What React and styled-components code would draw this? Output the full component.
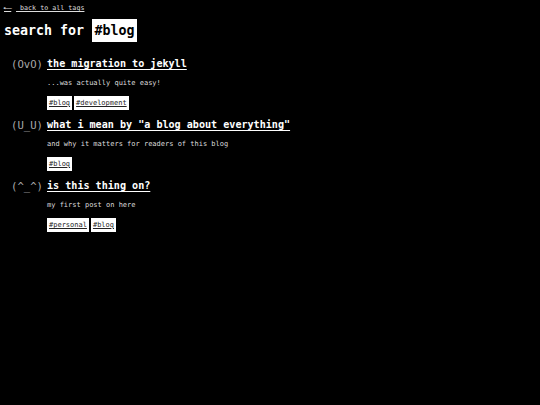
import React from 'react';
import styled, {createGlobalStyle} from 'styled-components';

const Global = createGlobalStyle`
  html, body {
    margin: 0;
    padding: 0;
    background: #000;
  }
  body {
    font-family: "DejaVu Sans Mono", "Liberation Mono", monospace;
    color: #fff;
  }
`

const Page = styled.div`
  min-height: 405px;
  padding: 3px 4px 0;
  box-sizing: border-box;
  background: #000;
`

const BackLink = styled.a`
  display: block;
  font-size: 6.7px;
  line-height: 10px;
  color: #ddd;
  text-decoration: underline;
  cursor: pointer;
  white-space: pre;
`

const Arrow = styled.span`
  display: inline-block;
  width: 12px;
  text-decoration: underline;
  transform: scaleX(1.8);
  transform-origin: left center;
`

const Heading = styled.h1`
  margin: 6px 0 0;
  font-size: 13.3px;
  line-height: 23px;
  font-weight: bold;
  color: #fff;
  white-space: pre;
`

const HeadTag = styled.span`
  display: inline-block;
  background: #fff;
  color: #000;
  padding: 0 2.5px;
  height: 23px;
`

const PostList = styled.div`
  margin-top: 14px;
`

const Post = styled.div`
  display: grid;
  grid-template-columns: 39px 1fr;
  column-gap: 4px;
  margin-bottom: 7px;
`

const Face = styled.div`
  font-size: 10.6px;
  line-height: 16px;
  color: #aaa;
  text-align: right;
  white-space: pre;
`

const Body = styled.div`
  display: flex;
  flex-direction: column;
  align-items: flex-start;
`

const Title = styled.a`
  font-size: 10.1px;
  line-height: 16px;
  font-weight: bold;
  color: #fff;
  text-decoration: underline;
  text-underline-offset: 2px;
  cursor: pointer;
`

const Desc = styled.p`
  margin: 6px 0 0;
  font-size: 7px;
  line-height: 10px;
  color: #ddd;
`

const Tags = styled.div`
  display: flex;
  gap: 2px;
  margin-top: 8px;
`

const Tag = styled.a`
  display: inline-block;
  background: #fff;
  color: #222;
  font-size: 7px;
  line-height: 14px;
  padding: 0 2px;
  text-decoration: underline;
  cursor: pointer;
`

const posts = [
  {face: '(OvO)', title: 'the migration to jekyll', desc: '...was actually quite easy!', tags: ['#blog', '#development']},
  {face: '(U_U)', title: 'what i mean by "a blog about everything"', desc: 'and why it matters for readers of this blog', tags: ['#blog']},
  {face: '(^_^)', title: 'is this thing on?', desc: 'my first post on here', tags: ['#personal', '#blog']},
]

export default function App() {
  return (
    <>
      <Global />
      <Page>
        <BackLink><Arrow>⟵</Arrow> back to all tags</BackLink>
        <Heading>search for <HeadTag>#blog</HeadTag></Heading>
        <PostList>
          {posts.map((p) => (
            <Post key={p.title}>
              <Face>{p.face}</Face>
              <Body>
                <Title>{p.title}</Title>
                <Desc>{p.desc}</Desc>
                <Tags>
                  {p.tags.map((t) => <Tag key={t}>{t}</Tag>)}
                </Tags>
              </Body>
            </Post>
          ))}
        </PostList>
      </Page>
    </>
  )
}
